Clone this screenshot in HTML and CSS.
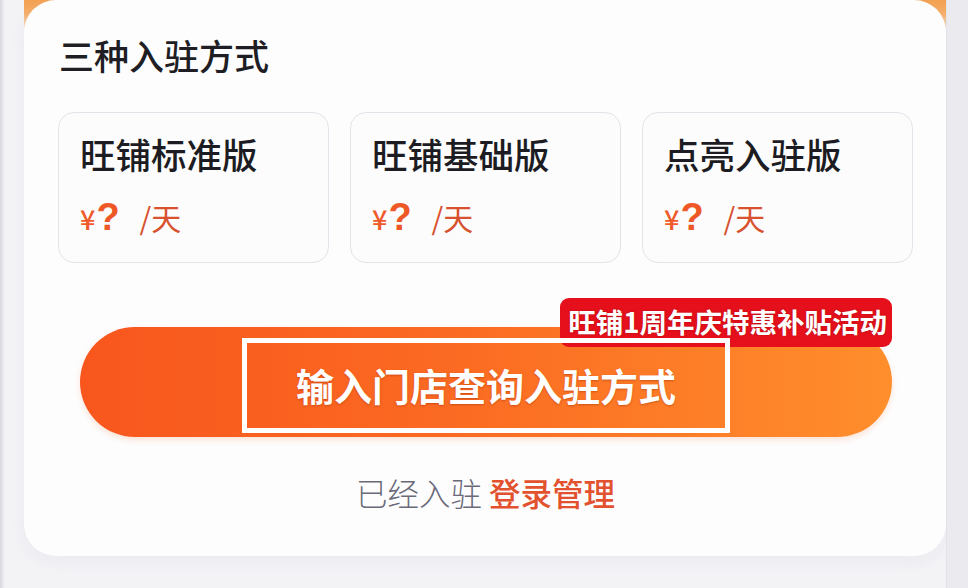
FILE: index.html
```html
<!DOCTYPE html>
<html lang="zh-CN">
<head>
<meta charset="utf-8">
<title>三种入驻方式</title>
<link rel="stylesheet" href="styles.css">
</head>
<body>
<div class="page">
  <div class="edge"></div>
  <div class="stage">
    <div class="card">
      <h1 class="title">三种入驻方式</h1>
      <div class="plans">
        <div class="plan">
          <div class="plan-name">旺铺标准版</div>
          <div class="plan-price"><span class="yen">¥</span><span class="q">?</span><span class="unit">/天</span></div>
        </div>
        <div class="plan">
          <div class="plan-name">旺铺基础版</div>
          <div class="plan-price"><span class="yen">¥</span><span class="q">?</span><span class="unit">/天</span></div>
        </div>
        <div class="plan">
          <div class="plan-name">点亮入驻版</div>
          <div class="plan-price"><span class="yen">¥</span><span class="q">?</span><span class="unit">/天</span></div>
        </div>
      </div>
      <div class="cta">
        <span class="badge">旺铺1周年庆特惠补贴活动</span>
        <div class="cta-btn">
          <span class="frame">输入门店查询入驻方式</span>
        </div>
      </div>
      <p class="login">已经入驻 <a class="login-link">登录管理</a></p>
    </div>
  </div>
  <div class="side"></div>
</div>
</body>
</html>
```
FILE: styles.css
```css
html, body {
  margin: 0;
  padding: 0;
}
body {
  background: #f3f3f6;
  font-family: "Noto Sans CJK SC", "Noto Sans", sans-serif;
  width: 968px;
  height: 588px;
  overflow: hidden;
}
.page {
  display: flex;
  width: 968px;
  height: 588px;
}
.edge {
  width: 4px;
  background: linear-gradient(90deg, #d6d6de, #eeeef2);
  flex: none;
}
.stage {
  flex: none;
  width: 922px;
  margin-left: 20px;
  background: linear-gradient(180deg, #f3a150 0, #f5ae68 14px, rgba(245,174,104,0) 34px);
}
.side {
  flex: 1;
  background: #ebebef;
  border-left: 1px solid #e2e2e8;
}
.card {
  background: #fdfdfe;
  height: 556px;
  border-radius: 32px;
  padding: 34px 33px 0 34px;
  box-sizing: border-box;
  box-shadow: 0 6px 14px rgba(200, 200, 215, 0.18);
}
.title {
  margin: 0 0 0 1px;
  font-size: 35px;
  line-height: 42px;
  font-weight: 500;
  color: #1e1e24;
}
.plans {
  display: flex;
  gap: 21px;
  margin-top: 36px;
}
.plan {
  width: 271px;
  height: 151px;
  box-sizing: border-box;
  border: 1px solid #e3e3ea;
  border-radius: 16px;
  background: #fcfcfd;
  padding: 20px 0 0 21px;
}
.plan-name {
  font-size: 35.5px;
  line-height: 42px;
  font-weight: 500;
  color: #1c1c22;
}
.plan-price {
  margin-top: 21px;
  display: flex;
  align-items: baseline;
  color: #ea5a2c;
  line-height: 42px;
}
.yen {
  font-size: 27px;
  font-weight: 500;
  color: #ef5a2a;
}
.q {
  font-family: "Liberation Sans", "Noto Sans", sans-serif;
  font-size: 38px;
  font-weight: 700;
  margin-left: 1px;
  color: #ee5726;
}
.unit {
  font-size: 30px;
  margin-left: 20px;
  color: #d9522f;
}
.cta {
  position: relative;
  margin: 64px 21px 0 22px;
}
.badge {
  position: absolute;
  right: 0;
  top: -29px;
  z-index: 1;
  height: 49px;
  box-sizing: border-box;
  padding: 0 5px 0 8px;
  background: #e5101b;
  border-radius: 9px;
  color: #fff;
  font-size: 27.5px;
  font-weight: 700;
  line-height: 47px;
  white-space: nowrap;
  text-shadow: 0 0 2px rgba(120, 0, 0, 0.5);
}
.cta-btn {
  position: relative;
  height: 110px;
  border-radius: 55px;
  background: linear-gradient(90deg, #f8561d 0%, #fb6a22 45%, #ff8e2c 100%);
  box-shadow: 0 3px 6px rgba(250, 120, 50, 0.2);
  display: flex;
  justify-content: center;
  align-items: center;
}
.frame {
  position: relative;
  z-index: 2;
  margin-top: 7px;
  border: 5px solid #fff;
  padding: 20px 49px 21px;
  color: #fff;
  font-size: 38px;
  font-weight: 700;
  line-height: 44px;
  white-space: nowrap;
  text-shadow: 0 1px 2px rgba(150, 40, 0, 0.45);
}
.login {
  margin: 34px 0 0;
  text-align: center;
  font-size: 31.5px;
  line-height: 42px;
  color: #6a6a78;
  font-weight: 300;
}
.login-link {
  color: #e3522e;
  font-weight: 500;
}
```
